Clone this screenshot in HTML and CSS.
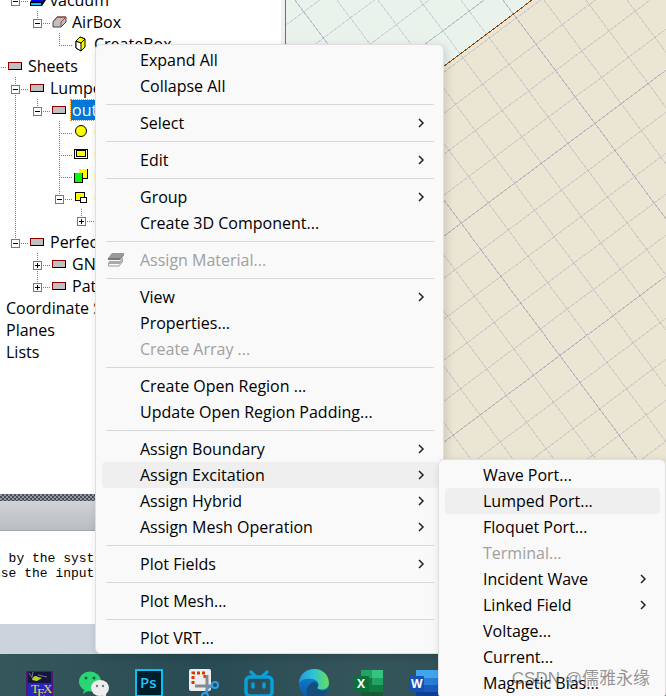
FILE: index.html
```
<!DOCTYPE html>
<html lang="en">
<head>
  <meta charset="UTF-8">
  <meta name="viewport" content="width=device-width, initial-scale=1.0">
  <title>3D Modeler</title>
  <link rel="stylesheet" href="styles.css">
</head>
<body>
  <!-- shared icons -->
  <svg class="defs" aria-hidden="true">
    <symbol id="sheet" viewBox="0 0 16 16">
      <path d="M0 4h14v8H0z" fill="#000"/>
      <path d="M0 4h14v1H1v7H0z" fill="#900000"/>
      <path d="M1 5h12v6H1z" fill="#c0c0c0"/>
    </symbol>
    <symbol id="arrow" viewBox="0 0 8 10">
      <path d="M2 1l4 4-4 4" fill="none" stroke="#222" stroke-width="1.5"/>
    </symbol>
  </svg>

  <div class="app">
    <div class="workspace">
      <div class="tree-panel">
        <ul class="tree">
          <li class="row">
            <span class="cell"></span>
            <span class="cell dash"><button class="toggle" aria-label="Collapse vacuum"></button></span>
            <svg class="icon" viewBox="0 0 16 16"><path d="M4 4h12l-4 6H0z" fill="#00f"/><path d="M0 10h12l4-6v4l-4 6H0z" fill="#000"/><path d="M1 11h10v2H1z" fill="#0cf"/></svg>
            <span class="label">vacuum</span>
          </li>
          <li class="row">
            <span class="cell"></span><span class="cell"></span>
            <span class="cell dash line half"><button class="toggle" aria-label="Collapse AirBox"></button></span>
            <svg class="icon" viewBox="0 0 16 16"><path d="M5 3h9v5l-5 5H1V8z" fill="#c0c0c0" stroke="#444"/><path d="M1 8l4-5h9M9 12V8l5-5" fill="none" stroke="#a04040"/></svg>
            <span class="label">AirBox</span>
          </li>
          <li class="row">
            <span class="cell"></span><span class="cell"></span><span class="cell"></span>
            <span class="cell dash from-left line half"></span>
            <svg class="icon" viewBox="0 0 16 16"><path d="M2 5l4-4 5 2v8l-4 4-5-3z" fill="#ff0" stroke="#000"/><path d="M2 5l5 2v8l-5-3z" fill="#fff" stroke="#000"/><path d="M2 5l4-4 5 2-4 4z" fill="#ff0" stroke="#000"/></svg>
            <span class="label">CreateBox</span>
          </li>
          <li class="row">
            <span class="cell dash"></span>
            <svg class="icon"><use href="#sheet"/></svg>
            <span class="label">Sheets</span>
          </li>
          <li class="row">
            <span class="cell"></span>
            <span class="cell dash line"><button class="toggle" aria-label="Collapse Lumped"></button></span>
            <svg class="icon"><use href="#sheet"/></svg>
            <span class="label">Lumped</span>
          </li>
          <li class="row">
            <span class="cell"></span><span class="cell line"></span>
            <span class="cell dash line half"><button class="toggle" aria-label="Collapse out"></button></span>
            <svg class="icon"><use href="#sheet"/></svg>
            <span class="label selected">out</span>
          </li>
          <li class="row">
            <span class="cell"></span><span class="cell line"></span><span class="cell"></span>
            <span class="cell dash from-left line"></span>
            <svg class="icon" viewBox="0 0 16 16"><circle cx="7" cy="7" r="5.500" fill="#ff0" stroke="#000"/></svg>
            <span class="label command">C</span>
          </li>
          <li class="row">
            <span class="cell"></span><span class="cell line"></span><span class="cell"></span>
            <span class="cell dash from-left line"></span>
            <svg class="icon" viewBox="0 0 16 16" shape-rendering="crispEdges"><path d="M0 3h14v10H0z"/><path d="M1 4h12v8H1z" fill="#fff"/><path d="M2 4h10v8H2z"/><path d="M3 5h8v5H3z" fill="#ff0"/><path d="M2 11h10v1H2z" fill="#fff"/></svg>
            <span class="label command">C</span>
          </li>
          <li class="row">
            <span class="cell"></span><span class="cell line"></span><span class="cell"></span>
            <span class="cell dash from-left line"></span>
            <svg class="icon" viewBox="0 0 16 16" shape-rendering="crispEdges"><path d="M5 1h9v10H5z"/><path d="M5 1h8v9H5z" fill="#ff0"/><path d="M0 5h9v10H0z"/><path d="M1 5h7v9H1z" fill="#0f0"/></svg>
            <span class="label command">C</span>
          </li>
          <li class="row">
            <span class="cell"></span><span class="cell line"></span><span class="cell"></span>
            <span class="cell dash line half"><button class="toggle" aria-label="Collapse command"></button></span>
            <svg class="icon" viewBox="0 0 16 16" shape-rendering="crispEdges"><path d="M1 2h10v9H1z"/><path d="M2 3h8v7H2z" fill="#ff0"/><path d="M6 7h7v6H6z"/><path d="M7 8h5v4H7z" fill="#fff"/></svg>
            <span class="label command">C</span>
          </li>
          <li class="row">
            <span class="cell"></span><span class="cell line"></span><span class="cell"></span><span class="cell"></span>
            <span class="cell dash line half"><button class="toggle plus" aria-label="Expand command"></button></span>
          </li>
          <li class="row">
            <span class="cell"></span>
            <span class="cell dash line half"><button class="toggle" aria-label="Collapse Perfect E"></button></span>
            <svg class="icon"><use href="#sheet"/></svg>
            <span class="label">Perfect E</span>
          </li>
          <li class="row">
            <span class="cell"></span><span class="cell"></span>
            <span class="cell dash line"><button class="toggle plus" aria-label="Expand GND"></button></span>
            <svg class="icon"><use href="#sheet"/></svg>
            <span class="label">GND</span>
          </li>
          <li class="row">
            <span class="cell"></span><span class="cell"></span>
            <span class="cell dash line half"><button class="toggle plus" aria-label="Expand Patch"></button></span>
            <svg class="icon"><use href="#sheet"/></svg>
            <span class="label">Patch</span>
          </li>
          <li class="row root"><span class="label">Coordinate Systems</span></li>
          <li class="row root"><span class="label">Planes</span></li>
          <li class="row root"><span class="label">Lists</span></li>
        </ul>
      </div>

      <div class="canvas">
        <svg shape-rendering="crispEdges" aria-hidden="true">
          <path class="plane" d="M0 185L246 0H2000V2000H0z"/>
          <path class="grid-minor" d="M-364 0l750 1007M-323 0l750 1007M-281 0l750 1007M-240 0l750 1007M-157 0l750 1007M-115 0l750 1007M-74 0l750 1007M-32 0l750 1007M51 0l750 1007M92 0l750 1007M134 0l750 1007M175 0l750 1007M258 0l750 1007M300 0l750 1007M341 0l750 1007M383 0l750 1007"/>
          <path class="grid-minor" d="M0 25l600-448M0 66l600-448M0 107l600-448M0 190l600-448M0 231l600-448M0 272l600-448M0 313l600-448M0 396l600-448M0 437l600-448M0 478l600-448M0 519l600-448M0 602l600-448M0 643l600-448M0 684l600-448M0 725l600-448"/>
          <path class="grid-major" d="M-198 0l750 1007M9 0l750 1007M217 0l750 1007M0 148l600-448M0 354l600-448M0 560l600-448"/>
          <path class="edge" d="M0 185L246 0"/>
        </svg>
      </div>
    </div>

    <div class="splitter"></div>
    <div class="message-bar"></div>
    <div class="messages">
      <p>n by the system</p>
      <p>use the input</p>
    </div>
    <div class="status"></div>

    <div class="taskbar">
      <button aria-label="TeX">
        <svg viewBox="0 0 30 30"><rect x="2" y="2" width="27" height="32" rx="1" fill="#4b1a70"/><path d="M4 3h23v30H4z" fill="#15153c"/><path d="M4 14h23v16H4z" fill="#2428bc"/><path d="M8 11q2-6 6-3l4 1-5 3z" fill="#b4d51d"/><path d="M5 4l4 6M9 3l-1 5M14 6l9 2" stroke="#778"/><text x="7" y="24" font-size="13" fill="#f1d33b">T<tspan dx="-2" dy="4">E</tspan><tspan dx="-2" dy="-4">X</tspan></text></svg>
      </button>
      <button aria-label="WeChat">
        <svg viewBox="0 0 30 30"><path d="M5 20l-1 5 5-3z" fill="#20c866"/><ellipse cx="11" cy="12.500" rx="11" ry="10" fill="#2bd573"/><circle cx="7" cy="9" r="1.500" fill="#17683b"/><circle cx="15" cy="9" r="1.500" fill="#17683b"/><ellipse cx="21" cy="19" rx="9" ry="8" fill="#eee"/><path d="M23 26l4 3v-5z" fill="#eee"/><circle cx="18" cy="17" r="1.200" fill="#777"/><circle cx="24" cy="17" r="1.200" fill="#777"/></svg>
      </button>
      <button aria-label="Photoshop">
        <svg viewBox="0 0 30 30"><rect x="2" y="1" width="26" height="26" fill="#001d2b" stroke="#08c1f6" stroke-width="2"/><text class="ps" x="6" y="19" font-size="15" fill="#20c5f7">Ps</text></svg>
      </button>
      <button aria-label="Snipping Tool">
        <svg viewBox="0 0 30 30"><rect width="22" height="22" rx="2" fill="#eee"/><path d="M4 15V4h12v5" fill="none" stroke="#d83b01" stroke-width="3" stroke-dasharray="3 2"/><path d="M6 17h17M18 6v17" stroke="#858b91" stroke-width="3"/><circle cx="26" cy="16" r="3" fill="none" stroke="#2f9ee5" stroke-width="2"/><circle cx="16" cy="27" r="3" fill="none" stroke="#2f9ee5" stroke-width="2"/><path d="M19 19l4-2M18 20l-1 4" stroke="#2f9ee5" stroke-width="2"/></svg>
      </button>
      <button aria-label="Bilibili">
        <svg viewBox="0 0 30 30"><g fill="none" stroke="#099fd8" stroke-width="3.500" stroke-linecap="round"><rect x="2" y="8" width="26" height="19" rx="4"/><path d="M7 3l4 4M23 3l-4 4"/><path d="M9 15v3M20 15v3"/></g></svg>
      </button>
      <button aria-label="Edge">
        <svg viewBox="0 0 30 30">
          <defs>
            <linearGradient id="edge-top"><stop offset="0" stop-color="#2298dc"/><stop offset=".5" stop-color="#31c4d5"/><stop offset="1" stop-color="#66df4f"/></linearGradient>
            <linearGradient id="edge-side" x2="0" y2="1"><stop offset="0" stop-color="#1389d8"/><stop offset="1" stop-color="#0b55a8"/></linearGradient>
          </defs>
          <circle cx="15" cy="15" r="15" fill="url(#edge-side)"/>
          <path d="M0 14C1-4 29-5 30 14c0 7-8 8-12 5 4-4 0-9-6-9C6 9 2 11 0 14z" fill="url(#edge-top)"/>
          <path d="M9 28c-4-7 1-15 7-15 3 1 4 4 2 6 2 3 8 4 11 1-3 8-12 12-20 8z" fill="#164d7c"/>
        </svg>
      </button>
      <button aria-label="Excel">
        <svg viewBox="0 0 30 30"><path d="M7 1h22v30H7z" fill="#185c37"/><path d="M7 1h11v8H7z" fill="#21a366"/><path d="M18 1h11v8H18z" fill="#33c481"/><path d="M18 9h11v7H18z" fill="#21a366"/><path d="M7 9h11v14H7zM18 16h11v7H18z" fill="#107c41"/><rect y="7" width="15" height="16" rx="1" fill="#0c7138"/><text class="office" x="3" y="19" font-size="12" fill="#fff">X</text></svg>
      </button>
      <button aria-label="Word">
        <svg viewBox="0 0 30 30"><path d="M7 1h23v8H7z" fill="#41a5ee"/><path d="M7 9h23v7H7z" fill="#2b7cd3"/><path d="M7 16h23v7H7z" fill="#185abd"/><path d="M7 23h23v7H7z" fill="#103f91"/><rect y="7" width="15" height="16" rx="1" fill="#1651b2"/><text class="office" x="2" y="19" font-size="12" fill="#fff">W</text></svg>
      </button>
    </div>
  </div>

  <div class="menu context-menu">
    <button>Expand All</button>
    <button>Collapse All</button>
    <hr>
    <button>Select<svg class="arrow"><use href="#arrow"/></svg></button>
    <hr>
    <button>Edit<svg class="arrow"><use href="#arrow"/></svg></button>
    <hr>
    <button>Group<svg class="arrow"><use href="#arrow"/></svg></button>
    <button>Create 3D Component...</button>
    <hr>
    <button class="with-icon" disabled>
      <svg class="material" viewBox="0 0 16 16"><path d="M4 1h12l-4 5H0z" fill="#999"/><path d="M0 6h12v2H0zM12 6l4-5v2l-4 5z" fill="#777"/><path d="M1 9h11l3-4v3l-3 4H0z" fill="#aaa"/><path d="M1 11l-1 3h11l4-5" fill="none" stroke="#999"/></svg>
      Assign Material...
    </button>
    <hr>
    <button>View<svg class="arrow"><use href="#arrow"/></svg></button>
    <button>Properties...</button>
    <button disabled>Create Array ...</button>
    <hr>
    <button>Create Open Region ...</button>
    <button>Update Open Region Padding...</button>
    <hr>
    <button>Assign Boundary<svg class="arrow"><use href="#arrow"/></svg></button>
    <button class="active">Assign Excitation<svg class="arrow"><use href="#arrow"/></svg></button>
    <button>Assign Hybrid<svg class="arrow"><use href="#arrow"/></svg></button>
    <button>Assign Mesh Operation<svg class="arrow"><use href="#arrow"/></svg></button>
    <hr>
    <button>Plot Fields<svg class="arrow"><use href="#arrow"/></svg></button>
    <hr>
    <button>Plot Mesh...</button>
    <hr>
    <button>Plot VRT...</button>
  </div>

  <div class="menu submenu">
    <button>Wave Port...</button>
    <button class="active">Lumped Port...</button>
    <button>Floquet Port...</button>
    <button disabled>Terminal...</button>
    <button>Incident Wave<svg class="arrow"><use href="#arrow"/></svg></button>
    <button>Linked Field<svg class="arrow"><use href="#arrow"/></svg></button>
    <button>Voltage...</button>
    <button>Current...</button>
    <button>Magnetic Bias...</button>
  </div>

  <div class="watermark">CSDN @儒雅永缘</div>
</body>
</html>
```

FILE: styles.css
```
* {
  box-sizing: border-box;
}
body {
  margin: 0;
  position: relative;
  height: 100vh;
  overflow: hidden;
  font-family: "Open Sans", "Noto Sans", sans-serif;
  font-size: 16px;
  color: #000;
}
button {
  font: inherit;
  color: inherit;
  border: none;
  background: none;
  padding: 0;
}
.defs {
  position: absolute;
  width: 0;
  height: 0;
}
.app {
  display: flex;
  flex-direction: column;
  height: 100%;
}
.workspace {
  display: flex;
  flex: 1;
  min-height: 0;
}

/* model tree */
.tree-panel {
  flex: 0 0 43%;
  overflow: hidden;
  background-color: #fff;
  border-right: 1px solid #6d7073;
  box-shadow: inset -4px 0 #f0f0f0;
}
.tree {
  list-style: none;
  margin: -11px 0 0 -14px;
  padding: 0;
}
.row {
  display: flex;
  align-items: center;
  height: 22px;
  white-space: nowrap;
}
.root {
  padding-left: 20px;
}
.cell {
  position: relative;
  flex: none;
  width: 22px;
  height: 22px;
  padding: 8px 3px;
}
.line::before {
  content: "";
  position: absolute;
  left: 7px;
  top: 0;
  width: 1px;
  height: 22px;
  background: repeating-linear-gradient(#777 0 1px, transparent 1px 2px);
}
.half::before {
  height: 12px;
}
.dash::after {
  content: "";
  position: absolute;
  left: 13px;
  right: 2px;
  top: 12px;
  height: 1px;
  background: repeating-linear-gradient(90deg, #777 0 1px, transparent 1px 2px);
}
.from-left::after {
  left: 7px;
}
.toggle {
  display: block;
  position: relative;
  width: 9px;
  height: 9px;
  border: 1px solid #777;
  background: linear-gradient(#000, #000) center / 5px 1px no-repeat #fff;
}
.plus {
  background: linear-gradient(#000, #000) center / 5px 1px no-repeat, linear-gradient(#000, #000) center / 1px 5px no-repeat, #fff;
}
.icon {
  flex: none;
  width: 16px;
  height: 16px;
  margin-right: 4px;
}
.label {
  line-height: 20px;
}
.selected {
  width: 60px;
  margin-left: -1px;
  padding-left: 1px;
  background-color: #0078d7;
  color: #fff;
  outline: 1px dotted #f80;
}
.command {
  color: #f5b800;
}

/* 3D view */
.canvas {
  flex: 1;
  min-width: 0;
  background-color: #eaf2ec;
}
.canvas svg {
  display: block;
  width: 100%;
  height: 100%;
}
.plane {
  fill: #ebe5d4;
}
.grid-minor,
.grid-major,
.edge {
  fill: none;
  stroke: rgba(150, 140, 175, 0.3);
}
.grid-major {
  stroke: rgba(110, 125, 165, 0.42);
}
.edge {
  stroke: #8a4b10;
}

/* message window */
.splitter {
  height: 7px;
  background: repeating-conic-gradient(#444e58 0 25%, #92989e 0 50%) 0 0 / 4px 4px;
}
.message-bar {
  height: 30px;
  background: linear-gradient(#d0d4d9, #b9bdc2);
  border-bottom: 1px solid #a2a5a8;
}
.messages {
  height: 93px;
  padding-top: 20px;
  margin-left: -7px;
  background-color: #fff;
  font-family: "Liberation Mono", monospace;
  font-size: 13px;
  line-height: 15px;
}
.messages p {
  margin: 0;
}
.status {
  height: 30px;
  background-color: #ccd3dc;
}
.taskbar {
  display: flex;
  gap: 25px;
  height: 42px;
  padding: 15px 24px 0;
  overflow: hidden;
  background: linear-gradient(90deg, #34585b, #294b54 30%, #34555a 55%, #2c4d54);
  font-family: "Liberation Serif", serif;
}
.taskbar button {
  flex: none;
  width: 30px;
  height: 30px;
}
.taskbar svg {
  display: block;
  width: 30px;
  height: 30px;
}
.ps,
.office {
  font-family: "Open Sans", sans-serif;
  font-weight: 600;
}
.office {
  font-weight: 700;
}

/* menus */
.menu {
  position: absolute;
  display: flex;
  flex-direction: column;
  padding: 2px 5px 2px 6px;
  background-color: #f9f9f9;
  border: 1px solid #e0e0e0;
  border-radius: 6px;
  box-shadow: 2px 3px 10px rgba(0, 0, 0, 0.14);
}
.context-menu {
  left: 95px;
  top: 44px;
  width: 349px;
}
.submenu {
  left: 438px;
  top: 459px;
  width: 228px;
}
.menu button {
  display: flex;
  align-items: center;
  justify-content: space-between;
  height: 26px;
  padding: 0 13px 0 38px;
  border-radius: 4px;
  text-align: left;
  white-space: nowrap;
}
.menu button:hover,
.menu .active {
  background-color: #efefef;
}
.menu button:disabled {
  color: #a0a0a0;
}
.menu .with-icon {
  justify-content: flex-start;
  gap: 16px;
  padding-left: 6px;
}
.menu hr {
  align-self: stretch;
  height: 1px;
  margin: 5px 4px;
  border: none;
  background-color: #d7d7d7;
}
.arrow {
  width: 8px;
  height: 10px;
}
.material {
  width: 16px;
  height: 16px;
}
.watermark {
  position: absolute;
  right: 16px;
  bottom: 5px;
  font-family: "Liberation Sans", "Noto Sans CJK SC", sans-serif;
  font-size: 17px;
  line-height: 24px;
  color: rgba(90, 90, 90, 0.65);
}
```
